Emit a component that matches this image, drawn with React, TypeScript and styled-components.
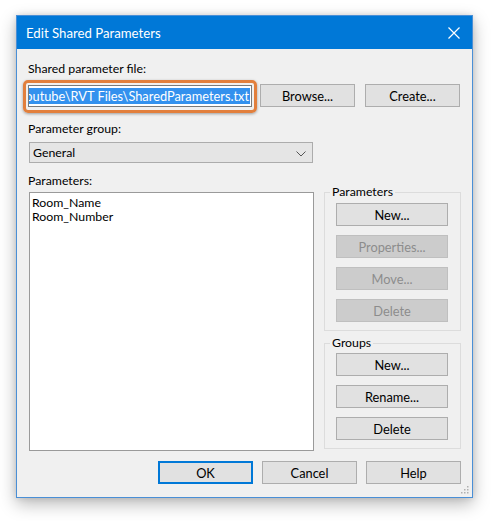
import React from "react";
import styled, { createGlobalStyle } from "styled-components";

const Global = createGlobalStyle`
  html, body { margin: 0; padding: 0; background: #ffffff; }
  body { font-family: "Lato", "Noto Sans", sans-serif; font-size: 12.3px; color: #000; }
  * { box-sizing: border-box; }
`;

const Page = styled.div`
  width: 493px;
  height: 521px;
  padding: 15px 0 0 16px;
`;

const Dialog = styled.div`
  position: relative;
  width: 457px;
  height: 483px;
  background: #f0f0f0;
  border: 1px solid #4a8fd6;
  box-shadow: 0 6px 16px rgba(0, 0, 0, 0.28), 0 0 6px rgba(0, 0, 0, 0.12);
  display: flex;
  flex-direction: column;
`;

const TitleBar = styled.div`
  height: 33px;
  background: #0078d7;
  color: #fff;
  display: flex;
  align-items: center;
  justify-content: space-between;
  padding: 0 10px 0 9px;
  font-size: 13.2px;
`;

const CloseIcon = styled.svg`
  width: 14px;
  height: 14px;
  margin-right: 1px;
`;

const Body = styled.div`
  flex: 1;
  display: flex;
  flex-direction: column;
  padding: 12px 11px 13px 11px;
`;

const Label = styled.div<{ $top?: number }>`
  line-height: 16px;
  height: 16px;
  white-space: nowrap;
  margin-top: ${(p) => p.$top ?? 0}px;
`;

const FileRow = styled.div`
  display: flex;
  align-items: center;
  margin-top: 7px;
  height: 23px;
`;

const FieldWrap = styled.div`
  position: relative;
  width: 224px;
  height: 22px;
  margin-right: 8px;
`;

const Field = styled.div`
  width: 100%;
  height: 100%;
  background: #fff;
  border: 1px solid #7a7a7a;
  padding: 2px 1px;
  overflow: hidden;
  display: flex;
  justify-content: flex-end;
`;

const Selected = styled.span`
  background: #3391ee;
  color: #fff;
  line-height: 16px;
  white-space: nowrap;
  font-size: 12.8px;
  padding-right: 1px;
`;

const Highlight = styled.div`
  position: absolute;
  left: -5px;
  top: -5px;
  right: -5px;
  bottom: -6px;
  border: 3px solid #e27f3c;
  border-radius: 5px;
  box-shadow: 0 1px 3px rgba(0, 0, 0, 0.35);
  pointer-events: none;
`;

const Button = styled.button<{ $w?: number; $disabled?: boolean; $default?: boolean }>`
  width: ${(p) => (p.$w ? `${p.$w}px` : "100%")};
  height: 23px;
  flex: none;
  margin: 0;
  padding: 0;
  font-family: inherit;
  font-size: 12.8px;
  line-height: 16px;
  color: ${(p) => (p.$disabled ? "#8c8c8c" : "#000")};
  background: ${(p) => (p.$disabled ? "#cccccc" : "#e1e1e1")};
  border: ${(p) =>
    p.$default ? "2px solid #0078d7" : p.$disabled ? "1px solid #bfbfbf" : "1px solid #adadad"};
`;

const Spacer = styled.div<{ $w: number }>`
  width: ${(p) => p.$w}px;
  flex: none;
`;

const Select = styled.div`
  margin-top: 5px;
  margin-left: 1px;
  width: 284px;
  height: 21px;
  background: #e5e5e5;
  border: 1px solid #acacac;
  display: flex;
  align-items: center;
  justify-content: space-between;
  padding: 0 6px 0 3px;
  line-height: 16px;
`;

const Chevron = styled.svg`
  width: 10px;
  height: 6px;
  margin-top: 2px;
`;

const Main = styled.div`
  display: flex;
  margin-top: 10px;
`;

const LeftCol = styled.div`
  display: flex;
  flex-direction: column;
  width: 286px;
`;

const List = styled.div`
  margin-top: 3px;
  margin-left: 1px;
  width: 285px;
  height: 259px;
  background: #fff;
  border: 1px solid #9a9a9a;
  padding: 3px 2px;
`;

const ListItem = styled.div`
  line-height: 14px;
  white-space: nowrap;
`;

const RightCol = styled.div`
  margin-left: 10px;
  margin-top: 11px;
  width: 137px;
  display: flex;
  flex-direction: column;
`;

const Group = styled.fieldset<{ $top?: number }>`
  margin: ${(p) => p.$top ?? 0}px 0 0 0;
  padding: 0 12px 8px 11px;
  border: 1px solid #dcdcdc;
  display: flex;
  flex-direction: column;
  min-width: 0;
`;

const Legend = styled.legend`
  padding: 0 2px;
  margin-left: -6px;
  line-height: 16px;
`;

const Stack = styled.div<{ $first: number }>`
  display: flex;
  flex-direction: column;
  gap: 9px;
  margin-top: ${(p) => p.$first}px;
`;

const Footer = styled.div`
  display: flex;
  justify-content: flex-end;
  gap: 9px;
  margin-top: 10px;
`;

const Grip = styled.svg`
  position: absolute;
  right: 3px;
  bottom: 3px;
  width: 9px;
  height: 9px;
`;

const gripDots = [
  [7, 1], [4, 4], [7, 4], [1, 7], [4, 7], [7, 7],
];

export default function App() {
  return (
    <>
      <Global />
      <Page>
        <Dialog>
          <TitleBar>
            <span>Edit Shared Parameters</span>
            <CloseIcon viewBox="0 0 14 14">
              <path d="M1.5 1.5 L12.5 12.5 M12.5 1.5 L1.5 12.5" stroke="#fff" strokeWidth="1.2" fill="none" />
            </CloseIcon>
          </TitleBar>
          <Body>
            <Label>Shared parameter file:</Label>
            <FileRow>
              <FieldWrap>
                <Field>
                  <Selected>Youtube\RVT Files\SharedParameters.txt</Selected>
                </Field>
                <Highlight />
              </FieldWrap>
              <Button $w={95}>Browse...</Button>
              <Spacer $w={10} />
              <Button $w={95}>Create...</Button>
            </FileRow>
            <Label $top={14}>Parameter group:</Label>
            <Select>
              <span>General</span>
              <Chevron viewBox="0 0 10 6">
                <path d="M0.5 0.5 L5 5 L9.5 0.5" stroke="#555" strokeWidth="1" fill="none" />
              </Chevron>
            </Select>
            <Main>
              <LeftCol>
                <Label>Parameters:</Label>
                <List>
                  <ListItem>Room_Name</ListItem>
                  <ListItem>Room_Number</ListItem>
                </List>
              </LeftCol>
              <RightCol>
                <Group>
                  <Legend>Parameters</Legend>
                  <Stack $first={3}>
                    <Button>New...</Button>
                    <Button $disabled>Properties...</Button>
                    <Button $disabled>Move...</Button>
                    <Button $disabled>Delete</Button>
                  </Stack>
                </Group>
                <Group $top={4}>
                  <Legend>Groups</Legend>
                  <Stack $first={2}>
                    <Button>New...</Button>
                    <Button>Rename...</Button>
                    <Button>Delete</Button>
                  </Stack>
                </Group>
              </RightCol>
            </Main>
            <Footer>
              <Button $w={95} $default>OK</Button>
              <Button $w={95}>Cancel</Button>
              <Button $w={95}>Help</Button>
            </Footer>
          </Body>
          <Grip viewBox="0 0 9 9">
            {gripDots.map(([x, y], i) => (
              <rect key={i} x={x} y={y} width="1.5" height="1.5" fill="#b0b0b0" />
            ))}
          </Grip>
        </Dialog>
      </Page>
    </>
  );
}
